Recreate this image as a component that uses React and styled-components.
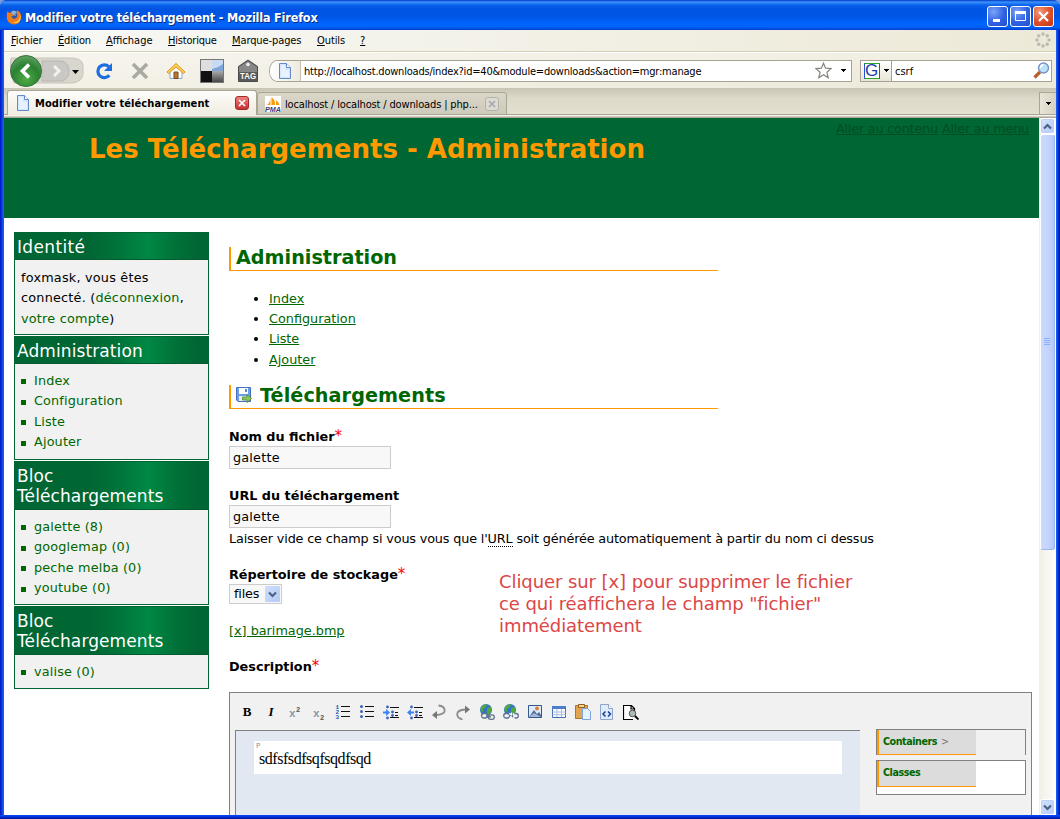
import React from "react";
import styled, { createGlobalStyle, css } from "styled-components";

const Global = createGlobalStyle`
  * { box-sizing: border-box; }
  html, body { margin: 0; padding: 0; }
  body { width: 1060px; height: 819px; overflow: hidden; background: #7a99d8; }
  svg { display: block; flex: none; }
`;
const ui = css`font-family: "DejaVu Sans Condensed", "DejaVu Sans", sans-serif; font-stretch: condensed;`;
const web = css`font-family: "DejaVu Sans", Verdana, sans-serif;`;

const Window = styled.div`
  width: 1060px; height: 819px; display: flex; flex-direction: column;
  border-radius: 7px 7px 0 0; overflow: hidden; background: #0a3fe0;
`;
const TitleBar = styled.header`
  height: 30px; flex: none; display: flex; align-items: center; padding: 3px 6px 0 6px;
  background: linear-gradient(#0039c4 0, #3a92ff 2px, #2b83f8 3px, #0a62ea 5px, #0054e3 9px, #0055e5 16px, #0066ff 24px, #0061f5 27px, #003fd0 30px);
`;
const Title = styled.div`
  ${ui} flex: 1; margin-left: 3px; padding-top: 2px; color: #fff; font-weight: bold; font-size: 12.5px; line-height: 16px;
  letter-spacing: ${(p) => p.$ls}px; white-space: nowrap; text-shadow: 1px 1px 0 #0a2a80;
`;
const WinButtons = styled.div`display: flex; gap: 2px;`;
const WinButton = styled.div`
  width: 21px; height: 21px; border: 1px solid #fff; border-radius: 3px; display: grid; place-items: center;
  background: ${(p) => p.$close ? "radial-gradient(circle at 30% 25%, #f09a7c, #e0522c 50%, #c03510)" : "radial-gradient(circle at 30% 25%, #7ba3f7, #2f62e3 55%, #2150cf)"};
`;
const Frame = styled.div`
  flex: 1; min-height: 0; display: flex; flex-direction: column; padding: 0 4px 4px;
  background: linear-gradient(#0848f5, #0030d8 50%, #001090) bottom / 100% 4px no-repeat,
    linear-gradient(90deg, #0015c0, #0a3fe0 2px, #1a68f5 4px, #1a68f5 1056px, #0038e8 1058px, #001090 1060px);
`;
const MenuBar = styled.nav`
  ${ui} height: 22px; flex: none; display: flex; align-items: center; padding: 0 5px 1px 7px; font-size: 11px; color: #000;
  background: linear-gradient(90deg, #f8f8f6, #efecdd 80%, #ece9d8); border-bottom: 1px solid #d6d0b6;
`;
const MenuItem = styled.span`width: ${(p) => p.$w}px; white-space: nowrap; letter-spacing: ${(p) => p.$ls || 0}px; u { text-underline-offset: 1px; }`;
const Grow = styled.span`flex: 1;`;
const NavBar = styled.div`
  height: 36px; flex: none; display: flex; align-items: center; padding-left: 4px; padding-right: 4px;
  border-top: 1px solid #fff; background: linear-gradient(90deg, rgba(255,255,255,.4), rgba(255,255,255,0)), linear-gradient(#f1eee2, #ece9d8);
`;
const Slot = styled.div`width: ${(p) => p.$w}px; display: flex; justify-content: center;`;
const AddressBar = styled.div`
  width: 583px; height: 22px; display: flex; align-items: center; border: 1px solid #a6a294;
  border-radius: 8px 0 0 8px / 11px 0 0 11px; background: #fff; overflow: hidden; padding-right: 5px;
`;
const SiteButton = styled.div`
  width: 31px; height: 20px; display: grid; place-items: center; background: linear-gradient(90deg, #fff, #edeadf); border-right: 1px solid #c4c0b1;
`;
const UiText = styled.span`
  ${ui} font-size: 11px; line-height: 14px; padding-top: 2px; white-space: nowrap; color: #000; letter-spacing: ${(p) => p.$ls || 0}px;
  font-weight: ${(p) => (p.$bold ? "bold" : "normal")}; margin-left: ${(p) => p.$ml || 0}px; flex: ${(p) => (p.$grow ? 1 : "none")};
`;
const SearchBox = styled.div`
  width: 192px; height: 22px; margin-left: 8px; display: flex; align-items: center; border: 1px solid #a6a294; background: #fff; padding-right: 1px;
`;
const EngineButton = styled.div`
  width: 31px; height: 20px; display: flex; align-items: center; gap: 4px; padding-left: 3px; background: linear-gradient(#fff, #e8e4d6); border-right: 1px solid #a6a294;
`;
const GBox = styled.div`
  width: 16px; height: 16px; border: 1px solid #2aa52a; border-left-color: #2255cc; border-right-color: #cc2222; background: #fff;
  font: 17px/14px "Liberation Sans", sans-serif; color: #1a3caa; text-align: center; text-indent: -1px;
`;
const TabStrip = styled.div`
  height: 30px; flex: none; display: flex; align-items: flex-end; padding: 0 0 3px 3px;
  background: linear-gradient(#c9c5b4, #dcd9ca 10px, #e3e0d0 26px, #aaa695 26px, #aaa695 27px, #f4f2ea 27px, #f4f2ea 28px, #aaa695 29px);
`;
const Tab = styled.div`
  height: ${(p) => (p.$active ? 25 : 23)}px; width: ${(p) => p.$w}px; display: flex; align-items: center; padding: 0 ${(p) => (p.$active ? "7px 0 8px" : "7px 0 7px")};
  border: 1px solid #aaa695; border-bottom: ${(p) => (p.$active ? "0" : "1px solid #aaa695")}; border-radius: 3px 3px 0 0;
  background: ${(p) => (p.$active ? "linear-gradient(#fdfdfb, #efecdf)" : "linear-gradient(#dad6c8, #cfcbbb)")};
`;
const CloseBox = styled.div`
  width: 14px; height: 14px; border-radius: 3px; display: grid; place-items: center;
  border: 1px solid ${(p) => (p.$red ? "#a02a2a" : "#b5b3aa")}; background: ${(p) => (p.$red ? "linear-gradient(#ee8080, #c92f2f)" : "#dcdad2")};
`;
const TabList = styled.div`
  width: 17px; height: 23px; display: grid; place-items: center; border: 1px solid #aaa695; border-right: 0; background: linear-gradient(90deg, #e8e5d8, #d5d1c2);
`;
const Viewport = styled.div`flex: 1; min-height: 0; display: flex; overflow: hidden;`;
const Page = styled.div`${web} position: relative; width: 1035px; height: 697px; overflow: hidden; background: #fff; font-size: 12.8px; line-height: 20.48px; color: #000;`;
const Banner = styled.div`height: 100px; background: #006633; display: flex; justify-content: space-between; padding: 0 10px 0 85px;`;
const SiteTitle = styled.h1`margin: 11px 0 0; font-size: 26px; line-height: 41px; color: #ff9900; white-space: nowrap; letter-spacing: ${(p) => p.$ls}px;`;
const SkipLinks = styled.div`display: flex; gap: 4px; padding-top: 1px; white-space: nowrap; letter-spacing: ${(p) => p.$ls}px; a { color: #004d22; text-decoration: underline; }`;
const Columns = styled.div`display: flex; padding: 14px 7px 0 10px; gap: 20px;`;
const Side = styled.aside`width: 195px; display: flex; flex-direction: column; gap: 1px;`;
const Block = styled.section`border: 1px solid #006633; background: #f1f1f1; height: ${(p) => p.$h}px;`;
const BlockTitle = styled.h2`
  margin: 0; height: ${(p) => p.$h}px; padding: 4px 2px 0; font-size: 17px; font-weight: normal; line-height: 20px; color: #fff; letter-spacing: ${(p) => p.$ls}px;
  background: linear-gradient(90deg, #006633 38%, #00733a 53%, #008844 69%, #006f38 85%, #006633 95%); border-bottom: 1px solid #005c2e;
`;
const BlockText = styled.p`margin: 0; padding: 8px 0 0 6px; white-space: nowrap; letter-spacing: 0.22px; a { color: #006600; }`;
const BlockList = styled.ul`margin: 0; padding: 7px 0 0 6px; list-style: none; color: #006600; letter-spacing: 0.16px;`;
const BlockItem = styled.li`
  display: flex; align-items: center; gap: 8px; height: 20.48px; white-space: nowrap;
  &::before { content: ""; width: 5px; height: 5px; background: #006600; margin-top: 1px; }
`;
const Main = styled.main`width: 803px; display: flex; flex-direction: column; align-items: flex-start; padding-top: 15px;`;
const Heading = styled.h2`
  margin: 0; width: 489px; height: 24px; display: flex; align-items: center; gap: 8px; border-left: 2px solid #ff9900; border-bottom: 1px solid #ff9900;
  padding: 0 0 3px 5px; font-size: 19.2px; line-height: 21px; color: #006600; letter-spacing: ${(p) => p.$ls}px; white-space: nowrap;
`;
const Links = styled.ul`margin: 17px 0 15px; padding: 0.5px 0 0 40px; height: 82px; a { color: #006600; text-decoration: underline; }`;
const Label = styled.label`font-weight: bold; height: 20px; line-height: 22px; white-space: nowrap; letter-spacing: ${(p) => p.$ls || 0}px; margin-top: ${(p) => p.$mt}px;`;
const Star = styled.span`color: #ff0000; font-weight: normal; font-size: 15px; line-height: 10px;`;
const Field = styled.div`width: 162px; height: 23px; border: 1px solid #ccc; background: #f8f8f8; padding-left: 3px; line-height: 21px; letter-spacing: 0.2px;`;
const Hint = styled.p`margin: 1px 0 0; white-space: nowrap; line-height: 20px; letter-spacing: ${(p) => p.$ls}px; abbr { text-decoration: none; border-bottom: 1px dotted #000; display: inline-block; line-height: 14px; }`;
const Select = styled.div`width: 53px; height: 20px; border: 1px solid #ccc; background: #f8f8f8; display: flex; align-items: center; justify-content: space-between; padding: 0 1px 0 4px; letter-spacing: -0.2px;`;
const SelectArrow = styled.span`width: 15px; height: 16px; background: linear-gradient(135deg, #d0defc, #b3c9f8); border-radius: 1px; display: grid; place-items: center;`;
const FileLink = styled.a`color: #006600; text-decoration: underline; margin-top: 17px; height: 20px; white-space: nowrap;`;
const Editor = styled.div`width: 803px; height: 140px; margin-top: 16px; border: 1px solid #808080; background: #f1f1f1;`;
const Tools = styled.div`height: 37px; display: flex; align-items: center; padding: 1px 0 0 5px;`;
const Tool = styled.span`width: 24px; height: 24px; display: grid; place-items: center; font: bold 13px "Liberation Serif", serif; font-style: ${(p) => (p.$italic ? "italic" : "normal")};`;
const EditorBody = styled.div`display: flex; padding-left: 5px; gap: 16px;`;
const Canvas = styled.div`width: 625px; height: 120px; background: #e1e8f2; border: solid #808080; border-width: 1px 0 0 1px; padding: 10px 18px;`;
const Paragraph = styled.div`height: 33px; background: #fff; padding-left: 5px; font: 16px/36px "Liberation Serif", serif; letter-spacing: ${(p) => p.$ls}px; position: relative;`;
const Mark = styled.span`position: absolute; left: 2px; top: 1px; font: 7px/8px "DejaVu Sans", sans-serif; color: #889;`;
const Panels = styled.div`width: 150px; margin-top: -1px;`;
const Panel = styled.div`height: ${(p) => p.$h}px; margin-bottom: 5px; border: 1px solid #808080; border-bottom-width: ${(p) => (p.$open ? 0 : 1)}px; background: ${(p) => (p.$open ? "#f1f1f1" : "#fff")};`;
const PanelTitle = styled.div`
  width: 99px; height: ${(p) => p.$h}px; background: #dcdcdc; border-left: 2px solid #ff9900; border-bottom: 1px solid #ff9900; padding-left: 4px;
  font-size: 9.6px; line-height: 23px; font-weight: bold; color: #006600; letter-spacing: -0.45px; span { color: #777; font-weight: normal; margin-left: 1px; }
`;
const Note = styled.p`position: absolute; left: 495px; top: 453px; margin: 0; font-size: 18px; line-height: 22px; color: #dc4646; white-space: nowrap; letter-spacing: ${(p) => p.$ls}px;`;
const Scroll = styled.div`width: 17px; height: 697px; display: flex; flex-direction: column; background: linear-gradient(90deg, #f0eee6, #fefefb); padding: 0 1px 0 1px;`;
const ScrollButton = styled.div`height: 16px; flex: none; display: grid; place-items: center; border: 1px solid #fff; outline: 1px solid #c0d0f5; outline-offset: -2px; border-radius: 3px; background: linear-gradient(135deg, #d5e2fd, #b5caf8);`;
const Thumb = styled.div`height: 416px; flex: none; display: grid; place-items: center; border: 1px solid #fff; border-right-color: #9bb5ee; border-bottom-color: #9bb5ee; border-radius: 3px; background: linear-gradient(90deg, #cbdafd, #c3d3fc 60%, #b4c8f6);`;

const Down = () => <svg width="5" height="3" shapeRendering="crispEdges"><path d="M0 0h5v1h-1v1h-1v1h-1v-1h-1v-1h-1z" /></svg>;
const Chevron = ({ up }) => <svg width="9" height="7" viewBox="0 0 9 7"><path d={up ? "M1 5.5 4.5 2 8 5.5" : "M1 1.5 4.5 5 8 1.5"} fill="none" stroke="#4d6185" strokeWidth="2.2" /></svg>;
const Cross = ({ c }) => <svg width="8" height="8"><path d="M1 1 7 7M7 1 1 7" stroke={c} strokeWidth="1.7" /></svg>;
const PageIcon = () => (
  <svg width="14" height="16"><path d="M1.500.5h7l4 4v11h-11z" fill="#d3e7fc" stroke="#6389c8" /><path d="M3 2h4v5h4v7H3z" fill="#f5faff" opacity=".6" /><path d="M8.500.5v4h4" fill="#fff" stroke="#6389c8" /></svg>
);
const Firefox = () => (
  <svg width="16" height="16" viewBox="0 0 16 16">
    <circle cx="8" cy="7.500" r="6.500" fill="#2a57a8" /><path d="M6 2q4-1 5 2l-2 1 1 2-3-1-2-2z" fill="#7fb6e8" />
    <path d="M1.500 2 3 4q2-1 3 .5L8 6 5.500 7.500Q6 10 8.500 9.800 12 9 11 5q-.5-3 0-4 4.500 2.500 4.200 7Q14.500 15.500 8 15.500 1 15 .7 8 .5 5 1.500 2z" fill="#ee7a1a" />
    <path d="M13 4q2.500 5-1.500 8-3 2-6 .5 3 2.500 7 .5 4-3 .5-9z" fill="#ffd34a" />
  </svg>
);
const BackForward = () => (
  <svg width="78" height="34" viewBox="0 0 78 34">
    <defs><radialGradient id="bk" cx=".5" cy=".75" r=".8"><stop offset="0" stopColor="#4fab45" /><stop offset=".55" stopColor="#2b8132" /><stop offset="1" stopColor="#6aa66c" /></radialGradient></defs>
    <path d="M3 4h62q10 1 10 8v8q0 7-10 9H6q-5-13-3-25z" fill="#d8d6cd" stroke="#c8c5ba" />
    <path d="M34 7h20q7 2 7 10t-7 10H34z" fill="#c9c8c4" stroke="#b9b7b0" />
    <path d="M46 12l5 5-5 5" fill="none" stroke="#f1f1ee" strokeWidth="3" />
    <circle cx="18" cy="17" r="15.500" fill="url(#bk)" stroke="#38723b" />
    <path d="M21 10.500 14.500 17l6.500 6.500" fill="none" stroke="#fff" strokeWidth="3.600" />
    <path d="M64 16h7l-3.500 4z" />
  </svg>
);
const Reload = () => <svg width="18" height="18"><path d="M14.300 13.200a6.400 6.400 0 1 1-.5-8.500" fill="none" stroke="#1d6ee0" strokeWidth="3.200" /><path d="M17 1v8H9z" fill="#1d6ee0" /></svg>;
const Stop = () => <svg width="18" height="18"><path d="M2 2 16 16M16 2 2 16" stroke="#aaa9a2" strokeWidth="3.600" /></svg>;
const Home = () => (
  <svg width="20" height="18"><path d="M4 9v7.500h12V9l-6-6z" fill="#fff" stroke="#8aa7c8" /><path d="M8 10h4v6.500H8z" fill="#b9773a" stroke="#7a4518" /><path d="M1 10 10 1.500 19 10l-1.500 1.500L10 5l-7.500 6.500z" fill="#ffd35a" stroke="#dd931c" /></svg>
);
const Squares = () => (
  <svg width="24" height="24"><defs><linearGradient id="sq" x2="0" y2="1"><stop stopColor="#aaa" /><stop offset="1" stopColor="#484848" /></linearGradient></defs>
    <path d="M0 0h24v24H0z" fill="#777" /><path d="M1 1h11v11H1z" fill="#dedede" /><path d="M12 1h11v11H12z" fill="#7da5dc" /><path d="M12 1h11v4q-5 4-11 5z" fill="#c8dbf3" /><path d="M1 12h11v11H1z" fill="#111" /><path d="M12 12h11v11H12z" fill="url(#sq)" /></svg>
);
const TagText = styled.text`font: bold 8.5px "Liberation Sans", sans-serif; fill: #fff;`;
const Tag = () => (
  <svg width="20" height="24"><path d="M.5 7.500 10 1l9.500 6.500v15H.5z" fill="#5a5a5a" stroke="#4a4a4a" /><path d="M1 8 10 2l9 6v5H1z" fill="#888" /><circle cx="10" cy="5.500" r="1.800" fill="#eee" /><TagText x="2" y="20" textLength="16" lengthAdjust="spacingAndGlyphs">TAG</TagText></svg>
);
const StarIcon = () => <svg width="17" height="17"><path d="M8.500 1.200l2.100 5 5.400.4-4.100 3.600 1.300 5.400-4.700-2.900-4.700 2.900 1.300-5.400L1 6.600l5.400-.4z" fill="#fff" stroke="#85857f" strokeWidth="1.200" /></svg>;
const Lens = () => <svg width="17" height="17"><path d="M1.500 15.500 7 10" stroke="#b85f2a" strokeWidth="3.200" /><circle cx="10.500" cy="6" r="5" fill="#bfe0fb" stroke="#7792c6" strokeWidth="1.400" /><path d="M7.500 6q0-3 3-3.500" stroke="#fff" strokeWidth="1.500" fill="none" /></svg>;
const Throbber = () => (
  <svg width="16" height="16">{[0, 1, 2, 3, 4, 5, 6, 7].map((i) => <circle key={i} cx={8 + 6 * Math.cos(i * Math.PI / 4)} cy={8 + 6 * Math.sin(i * Math.PI / 4)} r="1.700" fill="#bbb9b2" />)}</svg>
);
const PmaText = styled.text`font: bold italic 6.5px "Liberation Sans", sans-serif; fill: #3b3b78;`;
const Pma = () => <svg width="16" height="16"><path d="M0 0h16v16H0z" fill="#fff" /><path d="M2 9Q5 7 5.500 2v7zM6.500 9V1q4 3 3.500 8zM11 9V4q3 2 3.500 5z" fill="#f89c0e" /><PmaText x="0" y="15.500" textLength="16" lengthAdjust="spacingAndGlyphs">PMA</PmaText></svg>;
const Save = () => (
  <svg width="16" height="16"><path d="M.5.5h14v14H2l-1.500-1.500z" fill="#6f9de3" stroke="#4470bf" /><path d="M3 1h9v6H3z" fill="#fff" /><path d="M9 2h2v3H9z" fill="#5c8ad6" /><path d="M3 9h8v5H3z" fill="#e8effa" /><path d="M6.500 10H11V7.500L15.600 11.500 11 15.500V13H6.500z" fill="#8fc65a" stroke="#4a8a2c" strokeWidth=".8" /></svg>
);
const G = ({ children }) => <svg width="16" height="16" viewBox="0 0 16 16">{children}</svg>;
const ScriptText = styled.text`font: ${(p) => p.$s}px "Liberation Mono", monospace; fill: ${(p) => p.$c}; font-weight: ${(p) => (p.$b ? "bold" : "normal")};`;
const Super = ({ sub }) => <G><ScriptText $s={11} $c="#8896a4" $b x="2" y="12.500">x</ScriptText><ScriptText $s={7} $c="#555" $b x="9" y={sub ? 15.500 : 8}>2</ScriptText></G>;
const Lines = () => <path d="M6 2.500h9M6 7.500h9M6 12.500h9" stroke="#111" />;
const Numbered = () => <G><Lines />{[1, 2, 3].map((n) => <ScriptText key={n} $s={6} $c="#2854b0" $b x="0.500" y={n * 5 - .3}>{n}</ScriptText>)}</G>;
const Bulleted = () => <G><Lines />{[2.5, 7.5, 12.5].map((y) => <circle key={y} cx="2.500" cy={y} r="1.500" fill="#3f63b8" />)}</G>;
const Indent = ({ out }) => (
  <G><path d="M7 3.500h9M12 8.500h3M12 11.500h3" stroke="#111" /><path d="M7 13.500h9" stroke="#111" />{[[4.500, 3], [9.500, 8], [9.500, 11.500], [4.500, 14]].map(([x, y], i) => <circle key={i} cx={x} cy={y} r="1.400" fill="#3f63b8" />)}
    <path d={out ? "M0 8.500l4-3.500V7.500h3v2H4V12z" : "M7 8.500 3 5v2.500H0v2h3V12z"} fill="#3d84f0" /></G>
);
const Undo = () => <G><path d="M7.500 1.500q6 .5 6.200 5-.2 4.200-9 4.500" fill="none" stroke="#8c8c8c" strokeWidth="1.800" /><path d="M1 11 6 7v8z" fill="#777" /></G>;
const Redo = () => <G><path d="M7.500 15.500Q2 14 2.200 10 2.500 6 10 5.500" fill="none" stroke="#8c8c8c" strokeWidth="1.800" /><path d="M15 5.500 10 1.500v8z" fill="#777" /></G>;
const Globe = ({ broken }) => (
  <G><circle cx="7" cy="6" r="6" fill="#3470cc" /><path d="M2 3q3-3.500 6-2.500L7 3 4 5v3L1.500 7zM8 4l4-1 .8 4-3 4-2-2z" fill="#4faa3c" />
    <rect x={broken ? 0.7 : 2.500} y="9.500" width="6" height="4.500" rx="2.200" fill="#f1f1f1" stroke="#60738e" strokeWidth="1.300" /><rect x="9.300" y={broken ? 9.500 : 10.800} width="6" height="4.500" rx="2.200" fill="#f1f1f1" stroke="#60738e" strokeWidth="1.300" />
    {broken ? <path d="M6.500 9l1 2M8.500 8.500v3M11 9l-1 2M6.500 16l1-3M9 16v-3M11.500 16l-1-3" stroke="#fff" strokeWidth="1.200" /> : <path d="M7 12l5 1" stroke="#60738e" strokeWidth="1.500" />}</G>
);
const Picture = () => <G><path d="M1.500 1.500h13v12h-13z" fill="#dcebfb" stroke="#38558c" /><path d="M2 13 7 6l3 4 2-2 2 3v2z" fill="#4c6b9c" /><path d="M2 13 7 9l7 4z" fill="#a5b9d6" /><circle cx="10" cy="4.500" r="1.900" fill="#e2792d" /></G>;
const Table = () => <G><path d="M1.500 2.500h13v11h-13z" fill="#fff" stroke="#406db8" /><path d="M1 2h14v3H1z" fill="#4e7dce" /><path d="M1.500 8h13M1.500 10.700h13M6 5v8M10.500 5v8" stroke="#a4bde5" /></G>;
const Paste = () => <G><path d="M.5 1.500h12v13H.5z" fill="#e1a453" stroke="#ae752b" /><path d="M3.500.5h6v3h-6z" fill="#f3d391" stroke="#91621f" /><path d="M7.500 4.500h5l3 3v8h-8z" fill="#e5f2ff" stroke="#7ba4dc" /></G>;
const Code = () => <G><path d="M1.500.5h8l4 4v11h-12z" fill="#e0ebfa" stroke="#90a5cc" /><path d="M9.500.5v4h4" fill="#fff" stroke="#90a5cc" /><path d="M6.500 7.500 4 10l2.500 2.500M9 7.500l2.500 2.500L9 12.500" fill="none" stroke="#183e96" strokeWidth="1.500" /></G>;
const Preview = () => <G><path d="M10 15.500H.5V1.500h8l3 3V7M8 1.500V5h3.500" fill="#fff" stroke="#000" strokeWidth="1.200" /><circle cx="9.500" cy="9.500" r="3.300" fill="#a9bcb7" stroke="#555" /><path d="M12 12l3.500 3.500" stroke="#000" strokeWidth="1.800" /></G>;

const sideLists = [
  { title: "Administration", h: 124, th: 27, items: ["Index", "Configuration", "Liste", "Ajouter"] },
  { title: <>Bloc<br />Téléchargements</>, h: 144, th: 48, items: ["galette (8)", "googlemap (0)", "peche melba (0)", "youtube (0)"] },
  { title: <>Bloc<br />Téléchargements</>, h: 83, th: 48, items: ["valise (0)"] },
];

export default function App() {
  return (
    <><Global />
      <Window>
        <TitleBar>
          <Firefox /><Title $ls={-0.17}>Modifier votre téléchargement - Mozilla Firefox</Title>
          <WinButtons>
            <WinButton><svg width="13" height="13"><path d="M2 9h7v3H2z" fill="#fff" /></svg></WinButton>
            <WinButton><svg width="13" height="13"><path d="M1.500 2.500h10v8h-10z" fill="none" stroke="#fff" /><path d="M1 1h11v3H1z" fill="#fff" /></svg></WinButton>
            <WinButton $close><svg width="13" height="13"><path d="M2 2 11 11M11 2 2 11" stroke="#fff" strokeWidth="2.200" /></svg></WinButton>
          </WinButtons>
        </TitleBar>
        <Frame>
          <MenuBar>
            <MenuItem $w={47} $ls={-0.1}><u>F</u>ichier</MenuItem><MenuItem $w={48} $ls={-0.2}><u>É</u>dition</MenuItem><MenuItem $w={62}><u>A</u>ffichage</MenuItem>
            <MenuItem $w={64} $ls={-0.2}><u>H</u>istorique</MenuItem><MenuItem $w={85} $ls={-0.1}><u>M</u>arque-pages</MenuItem><MenuItem $w={43} $ls={-0.1}><u>O</u>utils</MenuItem><MenuItem $w={10}><u>?</u></MenuItem>
            <Grow /><Throbber />
          </MenuBar>
          <NavBar>
            <BackForward />
            <Slot $w={36}><Reload /></Slot><Slot $w={36}><Stop /></Slot><Slot $w={36}><Home /></Slot><Slot $w={36}><Squares /></Slot><Slot $w={36}><Tag /></Slot>
            <Slot $w={3} />
            <AddressBar><SiteButton><PageIcon /></SiteButton><UiText $grow $ml={3} $ls={-0.21}>http://localhost.downloads/index?id=40&amp;module=downloads&amp;action=mgr:manage</UiText><StarIcon /><Slot $w={9} /><Down /></AddressBar>
            <SearchBox><EngineButton><GBox>G</GBox><Down /></EngineButton><UiText $grow $ml={3}>csrf</UiText><Lens /></SearchBox>
          </NavBar>
          <TabStrip>
            <Tab $active $w={250}><PageIcon /><UiText $bold $grow $ml={5} $ls={0.1}>Modifier votre téléchargement</UiText><CloseBox $red><Cross c="#fff" /></CloseBox></Tab>
            <Tab $w={250}><Pma /><UiText $grow $ml={4} $ls={-0.15}>localhost / localhost / downloads | php...</UiText><CloseBox><Cross c="#aaa" /></CloseBox></Tab>
            <Grow /><TabList><Down /></TabList>
          </TabStrip>
          <Viewport>
            <Page>
              <Banner><SiteTitle $ls={0}>Les Téléchargements - Administration</SiteTitle><SkipLinks $ls={-0.2}><a>Aller au contenu</a><a>Aller au menu</a></SkipLinks></Banner>
              <Columns>
                <Side>
                  <Block $h={103}><BlockTitle $h={27} $ls={0.35}>Identité</BlockTitle><BlockText>foxmask, vous êtes<br />connecté. (<a>déconnexion</a>,<br /><a>votre compte</a>)</BlockText></Block>
                  {sideLists.map((b, i) => <Block key={i} $h={b.h}><BlockTitle $h={b.th} $ls={0.1}>{b.title}</BlockTitle><BlockList>{b.items.map((t) => <BlockItem key={t}>{t}</BlockItem>)}</BlockList></Block>)}
                </Side>
                <Main>
                  <Heading $ls={0}>Administration</Heading>
                  <Links><li><a>Index</a></li><li><a>Configuration</a></li><li><a>Liste</a></li><li><a>Ajouter</a></li></Links>
                  <Heading $ls={0.07}><Save />Téléchargements</Heading>
                  <Label $mt={17}>Nom du fichier<Star>*</Star></Label><Field>galette</Field>
                  <Label $mt={16}>URL du téléchargement</Label><Field>galette</Field>
                  <Hint $ls={-0.155}>Laisser vide ce champ si vous vous que l'<abbr>URL</abbr> soit générée automatiquement à partir du nom ci dessus</Hint>
                  <Label $mt={15}>Répertoire de stockage<Star>*</Star></Label><Select>files<SelectArrow><Chevron /></SelectArrow></Select>
                  <FileLink>[x] barimage.bmp</FileLink>
                  <Label $mt={15}>Description<Star>*</Star></Label>
                  <Editor>
                    <Tools>
                      <Tool>B</Tool><Tool $italic>I</Tool><Tool><Super /></Tool><Tool><Super sub /></Tool><Tool><Numbered /></Tool><Tool><Bulleted /></Tool><Tool><Indent /></Tool><Tool><Indent out /></Tool>
                      <Tool><Undo /></Tool><Tool><Redo /></Tool><Tool><Globe /></Tool><Tool><Globe broken /></Tool><Tool><Picture /></Tool><Tool><Table /></Tool><Tool><Paste /></Tool><Tool><Code /></Tool><Tool><Preview /></Tool>
                    </Tools>
                    <EditorBody>
                      <Canvas><Paragraph $ls={-0.45}><Mark>P</Mark>sdfsfsdfsqfsqdfsqd</Paragraph></Canvas>
                      <Panels><Panel $open $h={26}><PanelTitle $h={25}>Containers <span>&gt;</span></PanelTitle></Panel><Panel $h={35}><PanelTitle $h={26}>Classes</PanelTitle></Panel></Panels>
                    </EditorBody>
                  </Editor>
                </Main>
              </Columns>
              <Note $ls={-0.08}>Cliquer sur [x] pour supprimer le fichier<br />ce qui réaffichera le champ "fichier"<br />immédiatement</Note>
            </Page>
            <Scroll>
              <ScrollButton><Chevron up /></ScrollButton>
              <Thumb><svg width="7" height="8"><path d="M0 .5h6M0 2.500h6M0 4.500h6M0 6.500h6" stroke="#8cb0f8" /></svg></Thumb>
              <Grow /><ScrollButton><Chevron /></ScrollButton>
            </Scroll>
          </Viewport>
        </Frame>
      </Window>
    </>
  );
}
